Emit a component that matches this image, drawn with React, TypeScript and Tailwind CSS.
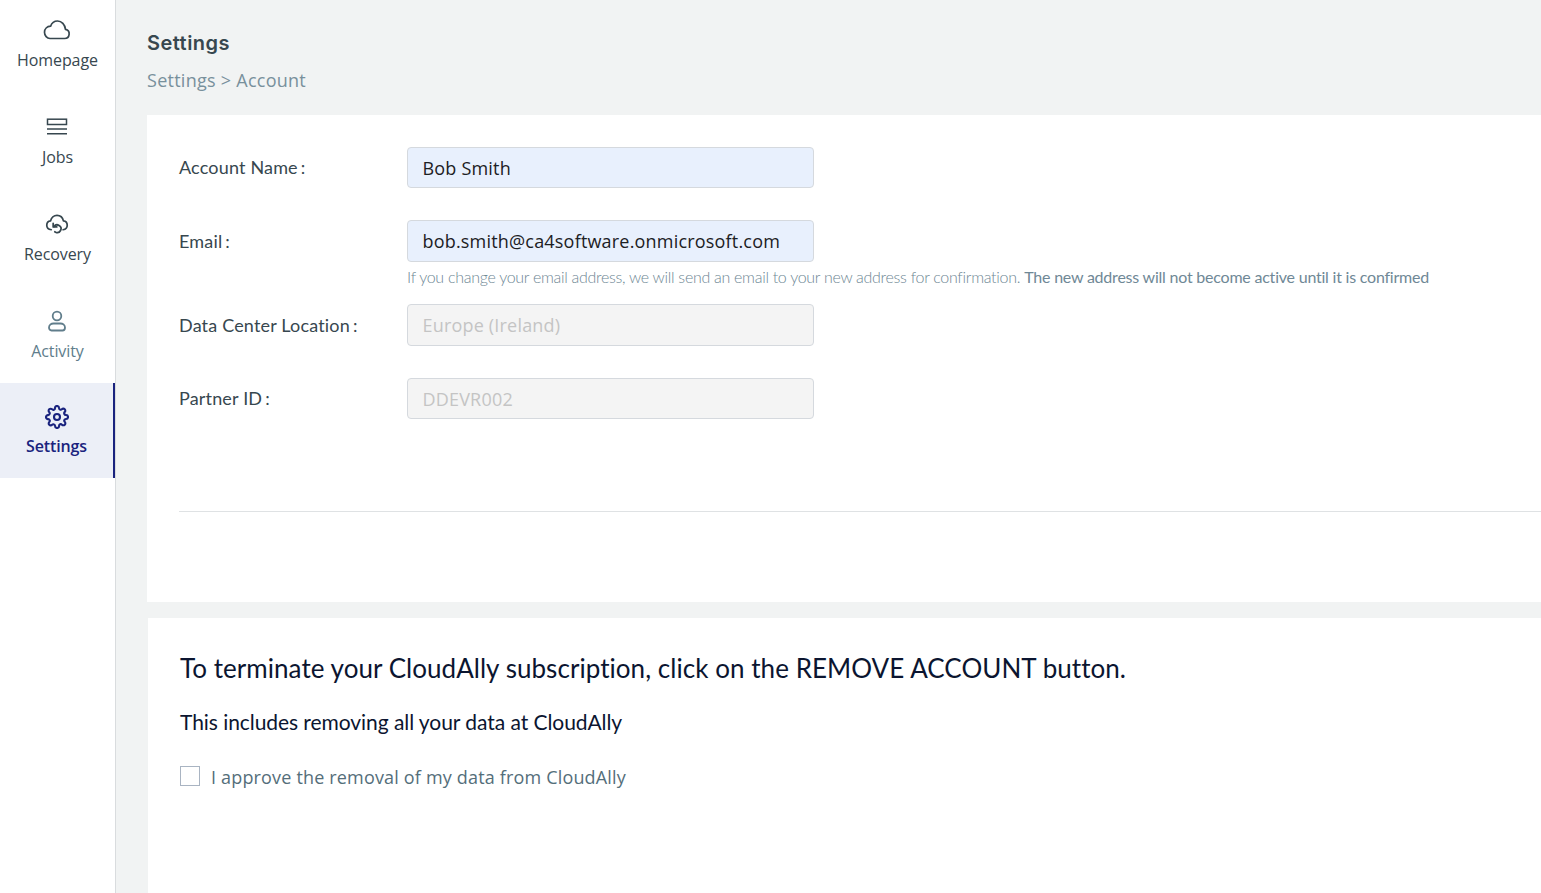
import { FiSettings } from "react-icons/fi";

const open = "font-['Open_Sans',sans-serif]";

function CloudIcon() {
  return (
    <svg width="28" height="22" viewBox="0 0 28 22" fill="none" stroke="#37474f" strokeWidth="1.7" strokeLinejoin="round">
      <path d="M7 19.500h14.500a4.600 4.600 0 0 0 1-9.100C22 5.600 18.600 2 14.600 2 11.200 2 8.600 4.200 7.600 7.200 4 7.400 1.500 10 1.500 13.300c0 3.400 2.500 6.200 5.500 6.200z" />
    </svg>
  );
}
function JobsIcon() {
  return (
    <svg width="22" height="18" viewBox="0 0 22 18" fill="none" stroke="#37474f" strokeWidth="1.5">
      <rect x="1.500" y="1.200" width="19" height="5.300" />
      <path d="M1 11h20M1 15.800h20" />
    </svg>
  );
}
function RecoveryIcon() {
  return (
    <svg width="24" height="22" viewBox="0 0 24 23" fill="none" stroke="#37474f" strokeWidth="1.8" strokeLinecap="round" strokeLinejoin="round">
      <path d="M6 17.500C3.300 17.200 1.300 15.300 1.300 12.800c0-2.400 1.800-4.200 4-4.500C6 5 8.800 2.500 12 2.500c3.400 0 6 2.400 6.700 5.700 2.300.3 4 2.200 4 4.600 0 2.400-1.800 4.300-4.300 4.700" />
      <path d="M8.800 12.800a4 4 0 1 1 1.700 5.800 4.500 4.500 0 0 1-.8-.5" transform="translate(0 1.500)" />
      <path d="M8 10.800v3.800h3.800" />
    </svg>
  );
}
function ActivityIcon() {
  return (
    <svg width="20" height="22" viewBox="0 0 20 22" fill="none" stroke="#607d8b" strokeWidth="1.800">
      <circle cx="10" cy="6" r="4.300" />
      <path d="M2 17.500c0-2.800 2.400-4 4.500-4h7c2.100 0 4.500 1.200 4.500 4 0 2-1 3-2.500 3h-11C3 20.500 2 19.500 2 17.500z" />
    </svg>
  );
}

function NavItem({ icon, label, h, muted }: { icon: React.ReactNode; label: string; h: string; muted?: boolean }) {
  return (
    <div className={`flex ${h} flex-col items-center pt-[18px]`}>
      <div className="flex h-6 items-center justify-center pr-[2px]">{icon}</div>
      <span className={`${open} mt-[6px] text-[16px] leading-[24px] tracking-[-0.1px] ${muted ? "text-[#607d8b]" : "text-[#37474f]"}`}>{label}</span>
    </div>
  );
}

function Field({ label, value, disabled, h, mb, odd }: { label: string; value: string; disabled?: boolean; h: string; mb: string; odd?: boolean }) {
  return (
    <div className={`flex items-center ${mb}`}>
      <label className={`w-[228px] font-['Lato',sans-serif] text-[18px] leading-[24px] tracking-[0.17px] text-[#37474f] ${odd ? "pb-[2px]" : ""}`}>
        {label}
        <span className="ml-[3px]">:</span>
      </label>
      <div
        className={`${open} ${h} flex w-[407px] items-center rounded-[4px] border border-[#d5d9de] px-[14.5px] text-[18px] tracking-[0.19px] ${odd ? "pt-[2px]" : ""} ${
          disabled ? "bg-[#f4f4f4] text-[#c4c4c4]" : "bg-[#e8f0fd] text-[#1c2024]"
        }`}
      >
        {value}
      </div>
    </div>
  );
}

export default function App() {
  return (
    <div className="flex h-[893px] w-full overflow-hidden bg-[#f1f3f3]">
      <aside className="h-full w-[116px] shrink-0 border-r border-[#d9dcde] bg-white">
        <NavItem icon={<CloudIcon />} label="Homepage" h="h-[97px]" />
        <NavItem icon={<JobsIcon />} label="Jobs" h="h-[97px]" />
        <NavItem icon={<RecoveryIcon />} label="Recovery" h="h-[97px]" />
        <NavItem icon={<ActivityIcon />} label="Activity" h="h-[92px]" muted />
        <div className="flex h-[95px] flex-col items-center border-r-2 border-[#1a237e] bg-[#eceff7] pt-[22px]">
          <div className="flex h-6 items-center justify-center">
            <FiSettings size={24} color="#1a237e" strokeWidth={2.1} />
          </div>
          <span className={`${open} mt-[5px] text-[16px] leading-[24px] font-semibold tracking-[-0.15px] text-[#1a237e]`}>Settings</span>
        </div>
      </aside>
      <main className="min-w-0 flex-1 pl-[31px]">
        <header className="h-[115px] pt-[28px]">
          <h1 className="font-['Inter',sans-serif] text-[20px] leading-[30px] font-semibold tracking-[0.45px] text-[#37474f]">Settings</h1>
          <p className={`${open} mt-[10px] text-[18px] leading-[24px] tracking-[0.26px] text-[#78909c]`}>Settings &gt; Account</p>
        </header>
        <section className="h-[487px] bg-white pt-[32px] pl-[32px]">
          <Field label="Account Name" value="Bob Smith" h="h-[41px]" mb="mb-[32px]" odd />
          <Field label="Email" value="bob.smith@ca4software.onmicrosoft.com" h="h-[42px]" mb="mb-[3px]" />
          <p className="ml-[228px] h-[39px] whitespace-nowrap font-['Lato',sans-serif] text-[16px] leading-[24px] tracking-[-0.29px] font-light text-[#6e8794]">
            If you change your email address, we will send an email to your new address for confirmation.{" "}
            <span className="font-normal tracking-[-0.22px] text-[#6f8896]">The new address will not become active until it is confirmed</span>
          </p>
          <Field label="Data Center Location" value="Europe (Ireland)" disabled h="h-[42px]" mb="mb-[32px]" />
          <Field label="Partner ID" value="DDEVR002" disabled h="h-[41px]" mb="mb-[92px]" odd />
          <div className="h-px bg-[#dfe2e4]" />
        </section>
        <section className="mt-[16px] ml-px h-[275px] bg-white pt-[32px] pl-[32px]">
          <h2 className="font-['Lato',sans-serif] text-[26px] leading-[36px] tracking-[0.05px] text-[#0b1530]">
            To terminate your CloudAlly subscription, click on the REMOVE ACCOUNT button.
          </h2>
          <p className="mt-[21px] font-['Lato',sans-serif] text-[21px] leading-[30px] tracking-[-0.06px] text-[#0b1530]">
            This includes removing all your data at CloudAlly
          </p>
          <label className="mt-[28px] flex items-center">
            <span className="mb-[2px] h-5 w-5 border border-[#a9b4c2] bg-white" />
            <span className={`${open} ml-[11px] text-[18px] leading-[24px] tracking-[0.17px] text-[#546e7a]`}>I approve the removal of my data from CloudAlly</span>
          </label>
        </section>
      </main>
    </div>
  );
}
